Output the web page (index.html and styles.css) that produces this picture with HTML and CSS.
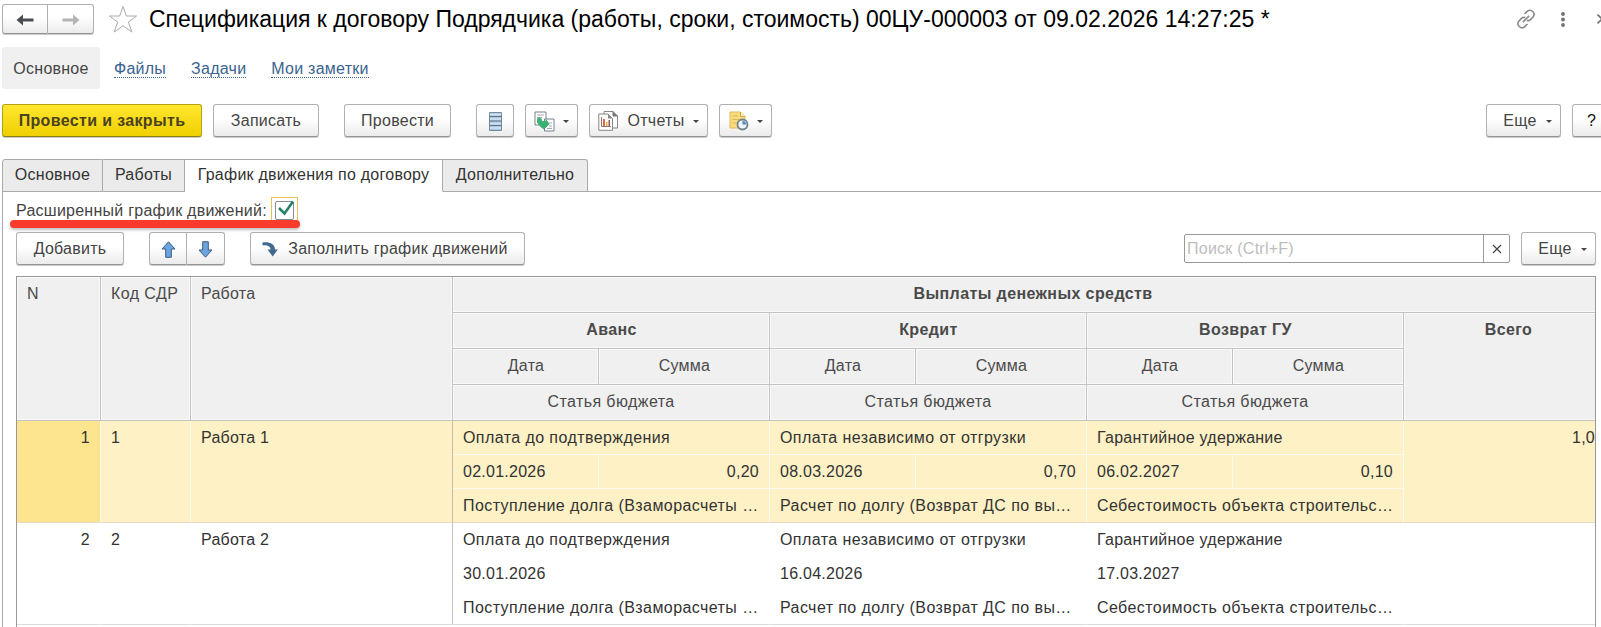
FILE: index.html
```html
<!DOCTYPE html>
<html lang="ru">
<head>
  <meta charset="UTF-8">
  <title>Спецификация к договору Подрядчика</title>
  <link rel="stylesheet" href="styles.css">
</head>
<body>

  <header class="title-bar">
    <div class="btn-group nav-buttons">
      <button class="btn"><svg width="18" height="14" viewBox="0 0 18 14"><path d="M0.500 7 7 1.500V5.500H17.500V8.500H7V12.500Z" fill="#4a4d50"/></svg></button>
      <button class="btn"><svg width="18" height="14" viewBox="0 0 18 14"><path d="M17.500 7 11 1.500V5.500H0.500V8.500H11V12.500Z" fill="#b4b4b4"/></svg></button>
    </div>
    <svg class="star" width="30" height="29" viewBox="0 0 30 29"><path d="M15 1.500 18.300 11H28.500L20.400 17 23.800 27 15 20.800 6.200 27 9.600 17 1.500 11H11.700Z" fill="none" stroke="#aaa" stroke-width="1"/></svg>
    <h1>Спецификация к договору Подрядчика (работы, сроки, стоимость) 00ЦУ-000003 от 09.02.2026 14:27:25 *</h1>
    <div class="window-tools">
      <svg width="20" height="20" viewBox="0 0 20 20" fill="none" stroke="#888" stroke-width="1.600"><path d="M8.500 5 11.500 2.200C15 -.6 20 4 17.200 7.700L14.500 10.600Q12.800 12 10.800 11.500M11.500 15 8.500 17.800C5 20.600 0 16 2.800 12.300L5.500 9.400Q7.200 8 9.200 8.500M6.800 13.200 13.200 6.800"/></svg>
      <svg width="4" height="15" viewBox="0 0 4 15" fill="#707070"><circle cx="2" cy="2" r="1.900"/><circle cx="2" cy="7.500" r="1.900"/><circle cx="2" cy="13" r="1.900"/></svg>
      <svg width="10" height="10" viewBox="0 0 10 10" stroke="#777" stroke-width="1.600"><path d="M0.500 0.500 9.500 9.500M9.500 0.500 0.500 9.500"/></svg>
    </div>
  </header>

  <nav class="sections">
    <a class="section active">Основное</a>
    <a class="section"><span>Файлы</span></a>
    <a class="section"><span>Задачи</span></a>
    <a class="section"><span>Мои заметки</span></a>
  </nav>

  <div class="toolbar">
    <button class="btn btn-primary">Провести и закрыть</button>
    <button class="btn btn-save">Записать</button>
    <button class="btn btn-post">Провести</button>
    <button class="btn btn-list">
      <svg width="13" height="19" viewBox="0 0 13 19"><path d="M.5 .5H12.500V18.500H.5Z" fill="#a9c4dc" stroke="#7b8a98"/><path d="M1 2.500H12M1 7H12M1 11.500H12M1 16H12" stroke="#d5e5f3" stroke-width="1.500"/><path d="M0 4.500H13M0 9H13M0 13.500H13" stroke="#65798c" stroke-width="1.200"/></svg>
    </button>
    <button class="btn btn-icon">
      <svg width="21" height="21" viewBox="0 0 21 21"><path d="M1 1H12V14H1Z" fill="#fff" stroke="#76818c"/><path d="M3 4H10M3 6.500H8" stroke="#a3abb3"/><path d="M10.500 8H20V20H10.500Z" fill="#fff" stroke="#76818c"/><path d="M15 12H18M15 15H18M13 17.500H18" stroke="#a3abb3"/><path d="M3.500 7.500 7 7.500 8 10.500 12 10.500V8.500L15 13 10 18 6.500 15.500 3.500 11.500Z" fill="#3bb273" stroke="#35a86b" stroke-width=".8"/></svg>
      <i class="caret"></i>
    </button>
    <button class="btn btn-reports">
      <svg width="21" height="20" viewBox="0 0 21 20"><path d="M6 .5H15L19.500 5V17H6Z" fill="#fff" stroke="#858585"/><path d="M15 .5V5H19.500" fill="#777" stroke="#777"/><path d="M.8 3H10L14.500 7.500V19.300H.8Z" fill="#fff" stroke="#858585"/><path d="M10 3V7.500H14.500" fill="#888"/><path d="M3.500 6V15.500H13" fill="none" stroke="#8d7770"/><path d="M5 8H7V15H5Z" fill="#e0654b"/><path d="M8 11H9.500V15H8Z" fill="#ebae43"/><path d="M10.500 9H12V15H10.500Z" fill="#8b5b55"/></svg>
      <span>Отчеты</span>
      <i class="caret"></i>
    </button>
    <button class="btn btn-icon">
      <svg width="20" height="20" viewBox="0 0 20 20"><path d="M1 1H11.500L16 5.500V17H1Z" fill="#f9dc7e" stroke="#dfb954"/><path d="M11.500 1V5.500H16" fill="#fff0b5" stroke="#c9a850"/><path d="M3.500 5H9M3.500 8.500H10M3.500 12H8" stroke="#d9b55c"/><circle cx="13.500" cy="13.500" r="5" fill="#eef4f8" stroke="#74818c" stroke-width="1.800"/><path d="M13.500 10V13.500H17A3.500 3.500 0 0 0 13.500 10Z" fill="#4e88bd"/></svg>
      <i class="caret"></i>
    </button>
    <button class="btn btn-more push-right">Еще <i class="caret"></i></button>
    <button class="btn btn-help">?</button>
  </div>

  <div class="tabs">
    <div class="tab tab-main">Основное</div>
    <div class="tab tab-works">Работы</div>
    <div class="tab tab-schedule active">График движения по договору</div>
    <div class="tab tab-extra">Дополнительно</div>
  </div>

  <main class="panel">
    <div class="option">
      <label>Расширенный график движений:</label>
      <span class="check-focus"><span class="check-box"></span>
        <svg width="18" height="18" viewBox="0 0 18 18"><path d="M2 9 7.500 14.500 16 2.500" fill="none" stroke="#268269" stroke-width="2.600"/></svg>
      </span>
      <div class="marker"></div>
    </div>

    <div class="table-bar">
      <button class="btn btn-add">Добавить</button>
      <div class="btn-group move-buttons">
        <button class="btn"><svg width="15" height="17" viewBox="0 0 15 17"><path d="M7.500 .8 14 8H10.300V16.300H4.700V8H1Z" fill="#6aa5df" stroke="#3d5c80"/></svg></button>
        <button class="btn"><svg width="15" height="17" viewBox="0 0 15 17"><path d="M7.500 16.200 14 9H10.300V.7H4.700V9H1Z" fill="#6aa5df" stroke="#3d5c80"/></svg></button>
      </div>
      <button class="btn btn-fill">
        <svg width="16" height="15" viewBox="0 0 16 15"><path d="M.5 .5C7 -.5 12.800 1.500 13 7.500H15.800L10.700 14.500 5.500 7.500H8.500C8.500 4.500 5.500 2.800 .5 3.500Z" fill="#41698f"/></svg>
        <span>Заполнить график движений</span>
      </button>
      <div class="search push-right">
        <input type="text" placeholder="Поиск (Ctrl+F)">
        <button class="search-clear"><svg width="10" height="10" viewBox="0 0 10 10" stroke="#444" stroke-width="1.200"><path d="M1 1 9 9M9 1 1 9"/></svg></button>
      </div>
      <button class="btn btn-more">Еще <i class="caret"></i></button>
    </div>

    <div class="table-wrap">
      <table>
        <colgroup>
          <col class="col-n"><col class="col-code"><col class="col-work">
          <col class="col-date"><col class="col-sum">
          <col class="col-date"><col class="col-sum">
          <col class="col-date"><col class="col-sum">
          <col class="col-total">
        </colgroup>
        <thead>
          <tr>
            <th rowspan="4" class="left">N</th>
            <th rowspan="4" class="left wide">Код СДР</th>
            <th rowspan="4" class="left">Работа</th>
            <th colspan="7" class="bold">Выплаты денежных средств</th>
          </tr>
          <tr>
            <th colspan="2" class="bold">Аванс</th>
            <th colspan="2" class="bold">Кредит</th>
            <th colspan="2" class="bold">Возврат ГУ</th>
            <th rowspan="3" class="bold">Всего</th>
          </tr>
          <tr>
            <th>Дата</th><th>Сумма</th>
            <th>Дата</th><th>Сумма</th>
            <th>Дата</th><th>Сумма</th>
          </tr>
          <tr>
            <th colspan="2" class="wide">Статья бюджета</th>
            <th colspan="2" class="wide">Статья бюджета</th>
            <th colspan="2" class="wide">Статья бюджета</th>
          </tr>
        </thead>
        <tbody class="selected">
          <tr>
            <td rowspan="3" class="num current last">1</td>
            <td rowspan="3" class="last">1</td>
            <td rowspan="3" class="last split">Работа 1</td>
            <td colspan="2" class="wide">Оплата до подтверждения</td>
            <td colspan="2" class="wide">Оплата независимо от отгрузки</td>
            <td colspan="2">Гарантийное удержание</td>
            <td rowspan="3" class="num total last">1,0</td>
          </tr>
          <tr>
            <td>02.01.2026</td><td class="num">0,20</td>
            <td>08.03.2026</td><td class="num">0,70</td>
            <td>06.02.2027</td><td class="num">0,10</td>
          </tr>
          <tr>
            <td colspan="2" class="wide last">Поступление долга (Взаморасчеты …</td>
            <td colspan="2" class="wide last">Расчет по долгу (Возврат ДС по вы…</td>
            <td colspan="2" class="wide last">Себестоимость объекта строительс…</td>
          </tr>
        </tbody>
        <tbody>
          <tr>
            <td rowspan="3" class="num last">2</td>
            <td rowspan="3" class="last">2</td>
            <td rowspan="3" class="last split">Работа 2</td>
            <td colspan="2" class="wide">Оплата до подтверждения</td>
            <td colspan="2" class="wide">Оплата независимо от отгрузки</td>
            <td colspan="2">Гарантийное удержание</td>
            <td rowspan="3" class="num total last"></td>
          </tr>
          <tr>
            <td>30.01.2026</td><td></td>
            <td>16.04.2026</td><td></td>
            <td>17.03.2027</td><td></td>
          </tr>
          <tr>
            <td colspan="2" class="wide last">Поступление долга (Взаморасчеты …</td>
            <td colspan="2" class="wide last">Расчет по долгу (Возврат ДС по вы…</td>
            <td colspan="2" class="wide last">Себестоимость объекта строительс…</td>
          </tr>
        </tbody>
      </table>
    </div>
  </main>

</body>
</html>
```
FILE: styles.css
```css
* {
  box-sizing: border-box;
}

body {
  margin: 0;
  height: 627px;
  overflow: hidden;
  background: #fff;
  color: #333;
  font-family: "Liberation Sans", Arial, sans-serif;
  font-size: 16px;
  letter-spacing: 0.25px;
}

button, input {
  font: inherit;
  letter-spacing: inherit;
}

svg {
  display: block;
  flex: none;
}

/* Buttons */
.btn {
  display: flex;
  align-items: center;
  justify-content: center;
  flex: none;
  height: 33px;
  padding: 1px 0 0;
  border: 1px solid #b0b0b0;
  border-bottom-color: #949494;
  border-radius: 3px;
  background: linear-gradient(#fff 45%, #ebebeb);
  box-shadow: 0 1px 0 #ccc;
  color: #444;
  white-space: nowrap;
}

.btn-group {
  display: flex;
}

.btn-group .btn:first-child {
  border-radius: 3px 0 0 3px;
}

.btn-group .btn:last-child {
  border-left: none;
  border-radius: 0 3px 3px 0;
}

.caret {
  border: 3px solid transparent;
  border-top-color: #444;
  border-bottom: none;
}

.push-right {
  margin-left: auto;
}

/* Title */
.title-bar {
  display: flex;
  align-items: center;
  height: 38px;
  padding-left: 2px;
}

.nav-buttons .btn {
  width: 46px;
  height: 30px;
}

.star {
  margin-left: 14px;
}

h1 {
  margin: 0 0 0 11px;
  color: #000;
  font-size: 23px;
  font-weight: normal;
  letter-spacing: 0;
  white-space: nowrap;
}

.window-tools {
  display: flex;
  align-items: center;
  gap: 25px;
  flex: none;
  margin-left: auto;
  margin-right: -6px;
}

.window-tools svg:last-child {
  margin-left: 7px;
}

/* Section links */
.sections {
  display: flex;
  gap: 25px;
  height: 42px;
  margin-top: 9px;
  padding-left: 2px;
  line-height: 43px;
}

.section {
  color: #3a648f;
}

.section span {
  border-bottom: 1px dotted #3a648f;
}

.section.active {
  width: 98px;
  margin-right: -11px;
  border-radius: 3px;
  background: #f0f0f0;
  color: #444;
  text-align: center;
}

/* Command bar */
.toolbar {
  display: flex;
  gap: 11px;
  margin-top: 15px;
  padding-left: 2px;
}

.btn-primary {
  width: 200px;
  border-color: #b59f13;
  border-bottom-color: #8e7d13;
  background: linear-gradient(#ffe72f, #f0d000);
  color: #4a4221;
  font-weight: bold;
  letter-spacing: 0.35px;
}

.btn-save {
  width: 106px;
}

.btn-post {
  width: 107px;
  margin-left: 14px;
}

.btn-list {
  width: 38px;
  margin-left: 14px;
}

.btn-icon {
  width: 53px;
  gap: 8px;
}

.btn-reports {
  width: 119px;
  gap: 9px;
}

.btn-more {
  width: 75px;
  gap: 9px;
  padding-left: 8px;
}

.btn-help {
  width: 39px;
  margin-right: -10px;
  color: #111;
}

/* Tabs */
.tabs {
  display: flex;
  height: 33px;
  margin: 22px 0 0 2px;
  border-bottom: 1px solid #aaa;
}

.tab {
  height: 33px;
  border: 1px solid #aaa;
  border-left-width: 0;
  background: #ebebeb;
  line-height: 29px;
  text-align: center;
}

.tab-main {
  width: 101px;
  border-left-width: 1px;
  border-radius: 3px 0 0 0;
}

.tab-works {
  width: 82px;
}

.tab-schedule {
  width: 258px;
}

.tab-extra {
  width: 145px;
  border-radius: 0 3px 0 0;
}

.tab.active {
  border-bottom-color: #fff;
  background: #fff;
}

/* Tab page */
.panel {
  height: 435px;
  margin-left: 2px;
  padding: 5px 5px 0 13px;
  border-left: 1px solid #aaa;
}

.option {
  position: relative;
  display: flex;
  align-items: center;
  gap: 4px;
  height: 27px;
  color: #444;
}

.check-focus {
  position: relative;
  width: 27px;
  height: 27px;
  padding: 3px;
  border: 1px solid #e8c255;
}

.check-box {
  display: block;
  width: 19px;
  height: 19px;
  border: 1px solid #8c8c8c;
  border-radius: 2px;
}

.check-focus svg {
  position: absolute;
  top: 1px;
  left: 5px;
}

.marker {
  position: absolute;
  top: 23px;
  left: -6px;
  width: 290px;
  height: 8px;
  border-radius: 4px;
  background: #f83b2d;
  box-shadow: 0 2px 3px rgba(0, 0, 0, 0.25);
}

.table-bar {
  display: flex;
  align-items: flex-start;
  margin-top: 8px;
}

.btn-add {
  width: 108px;
}

.move-buttons {
  margin-left: 25px;
}

.move-buttons .btn {
  width: 38px;
}

.btn-fill {
  width: 275px;
  margin-left: 25px;
  padding-right: 5px;
  gap: 10px;
}

.search {
  display: flex;
  width: 326px;
  height: 29px;
  margin-top: 2px;
  margin-right: 11px;
  border: 1px solid #999;
  border-radius: 2px;
}

.search input {
  flex: 1;
  min-width: 0;
  padding: 0 2px;
  border: none;
  background: none;
}

.search input::placeholder {
  color: #bdbdbd;
}

.search-clear {
  display: flex;
  align-items: center;
  justify-content: center;
  width: 26px;
  padding: 0;
  border: none;
  border-left: 1px solid #999;
  background: none;
}

/* Payments table */
.table-wrap {
  height: 360px;
  margin-top: 11px;
  border: 1px solid #999;
  border-bottom: none;
  overflow: hidden;
}

table {
  width: 1596px;
  table-layout: fixed;
  border-collapse: separate;
  border-spacing: 0;
}

.col-n { width: 84px; }
.col-code { width: 90px; }
.col-work { width: 262px; }
.col-date { width: 146px; }
.col-sum { width: 171px; }
.col-total { width: 209px; }

th, td {
  overflow: hidden;
  padding: 0 9px 0 10px;
  line-height: 20px;
  text-align: left;
  vertical-align: top;
  white-space: nowrap;
}

th {
  height: 36px;
  padding-top: 7px;
  border-right: 1px solid #c3c3c3;
  border-bottom: 1px solid #c3c3c3;
  background: #f0f0f0;
  box-shadow: inset 0 0 0 1px #fafafa;
  color: #4a4a4a;
  font-weight: normal;
  text-align: center;
}

th.left {
  text-align: left;
}

th.bold {
  font-weight: bold;
  letter-spacing: 0.4px;
}

td {
  height: 34px;
  padding-top: 7px;
  border-right: 1px solid #fff;
  border-bottom: 1px solid #fff;
}

td.num {
  padding-right: 10px;
  text-align: right;
}

td.total {
  padding-right: 17px;
}

th.wide,
td.wide {
  padding-right: 0;
  letter-spacing: 0.42px;
}

th.wide {
  padding-left: 0;
}

th.wide.left {
  padding-left: 10px;
}

td.last {
  border-bottom-color: #dcdcdc;
}

td.split {
  border-right-color: #c3c3c3;
}

.selected td {
  border-color: #fffaf0;
  background: #fdf1c5;
}

.selected td.last {
  border-bottom-color: #e3d9c4;
}

.selected td.split {
  border-right-color: #c6bda3;
}

.selected td.current {
  background: #fde48e;
}
```
